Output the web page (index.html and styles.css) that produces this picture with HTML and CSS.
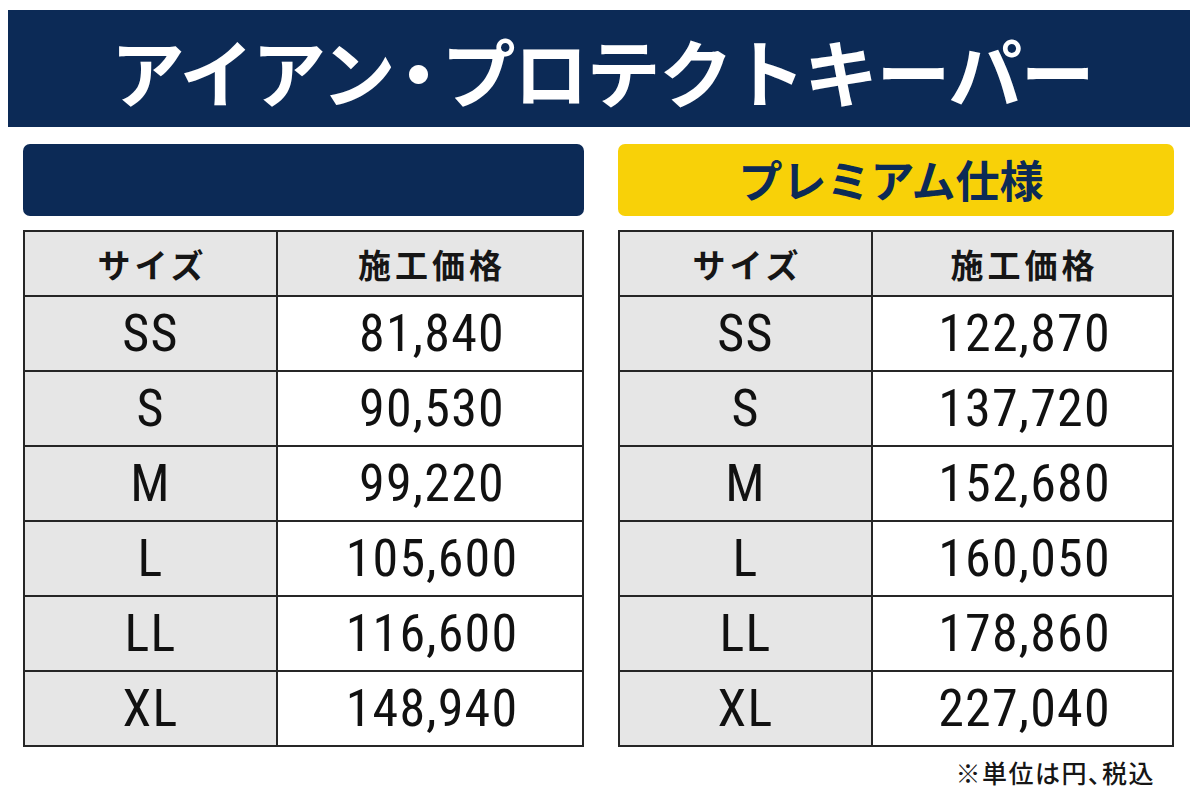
FILE: index.html
```html
<!DOCTYPE html>
<html lang="ja">
<head>
<meta charset="utf-8">
<title>アイアン・プロテクトキーパー</title>
<link rel="stylesheet" href="styles.css">
</head>
<body>
<div class="page">
  <header class="banner"><h1 class="title">アイアン<span class="dot">・</span>プロテクトキーパー</h1></header>
  <div class="columns">
    <section class="col">
      <div class="label label-navy"></div>
      <table class="price">
        <thead><tr><th class="c-size">サイズ</th><th class="c-price">施工価格</th></tr></thead>
        <tbody>
          <tr><td class="c-size">SS</td><td class="c-price">81,840</td></tr>
          <tr><td class="c-size">S</td><td class="c-price">90,530</td></tr>
          <tr><td class="c-size">M</td><td class="c-price">99,220</td></tr>
          <tr><td class="c-size">L</td><td class="c-price">105,600</td></tr>
          <tr><td class="c-size">LL</td><td class="c-price">116,600</td></tr>
          <tr><td class="c-size">XL</td><td class="c-price">148,940</td></tr>
        </tbody>
      </table>
    </section>
    <section class="col">
      <div class="label label-yellow">プレミアム仕様</div>
      <table class="price">
        <thead><tr><th class="c-size">サイズ</th><th class="c-price">施工価格</th></tr></thead>
        <tbody>
          <tr><td class="c-size">SS</td><td class="c-price">122,870</td></tr>
          <tr><td class="c-size">S</td><td class="c-price">137,720</td></tr>
          <tr><td class="c-size">M</td><td class="c-price">152,680</td></tr>
          <tr><td class="c-size">L</td><td class="c-price">160,050</td></tr>
          <tr><td class="c-size">LL</td><td class="c-price">178,860</td></tr>
          <tr><td class="c-size">XL</td><td class="c-price">227,040</td></tr>
        </tbody>
      </table>
      <p class="note">※単位は円、税込</p>
    </section>
  </div>
</div>
</body>
</html>
```
FILE: styles.css
```css
* { box-sizing: border-box; }
html, body { margin: 0; padding: 0; background: #ffffff; }
body {
  width: 1200px;
  height: 800px;
  overflow: hidden;
  font-family: "Noto Sans CJK JP", "Noto Sans", sans-serif;
  color: #141414;
}
.page { padding: 10px 10px 0 8px; }
.banner {
  height: 117px;
  background: #0c2a56;
  display: flex;
  align-items: center;
  justify-content: center;
}
.title {
  margin: 0;
  color: #ffffff;
  font-family: "Noto Sans CJK JP", sans-serif;
  font-weight: 700;
  font-size: 74px;
  letter-spacing: -1.5px;
  line-height: 1;
  padding-top: 2px;
  padding-left: 6px;
}
.dot { font-feature-settings: "palt"; padding: 0 6px; }
.columns {
  display: grid;
  grid-template-columns: 561px 556px;
  column-gap: 34px;
  padding-left: 15px;
  margin-top: 17px;
}
.col { display: flex; flex-direction: column; }
.label {
  height: 72px;
  border-radius: 7px;
  display: flex;
  align-items: center;
  justify-content: center;
  font-family: "Noto Sans CJK JP", sans-serif;
  font-weight: 700;
  font-size: 44px;
  color: #0c2a56;
}
.label-navy { background: #0c2a56; }
.label-yellow { background: #f8d108; padding-bottom: 2px; padding-right: 10px; }
.price {
  margin-top: 14px;
  width: 100%;
  border-collapse: collapse;
  border: 2px solid #262626;
  table-layout: fixed;
}
.price th, .price td {
  border: 2px solid #262626;
  text-align: center;
  vertical-align: middle;
  padding: 0;
}
.price th {
  height: 65px;
  background: #e6e6e6;
  font-family: "Noto Sans CJK JP", sans-serif;
  font-weight: 700;
  font-size: 33px;
  letter-spacing: 4px;
  text-indent: 4px;
  color: #161616;
}
.price td {
  height: 75px;
  font-family: "Liberation Sans Narrow", "Roboto Condensed", Roboto, sans-serif;
  font-size: 52px;
  font-weight: 400;
  letter-spacing: 1.2px;
  color: #111111;
  line-height: 1;
}
.price .c-size { width: 253px; }
.price td.c-size { background: #e6e6e6; }
.price td.c-price { background: #ffffff; padding-left: 4px; }
.note {
  margin: 13px 19px 0 0;
  text-align: right;
  font-family: "Noto Sans CJK JP", sans-serif;
  font-feature-settings: "palt";
  font-weight: 500;
  font-size: 25px;
  letter-spacing: 1.5px;
  line-height: 1;
  color: #161616;
}
```
